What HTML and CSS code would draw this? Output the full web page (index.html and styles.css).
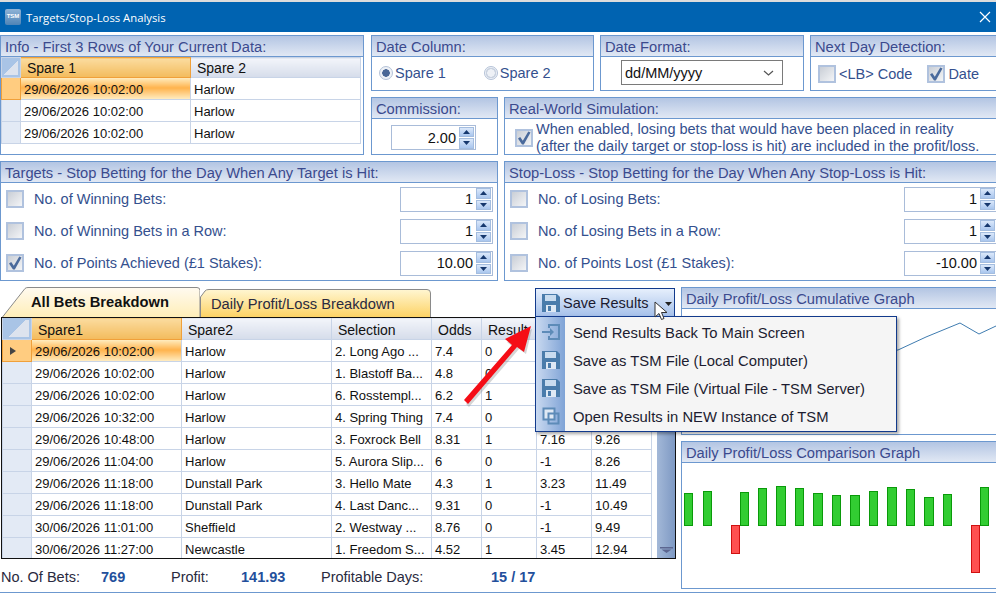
FILE: index.html
```html
<!DOCTYPE html>
<html lang="en">
<head>
    <meta charset="UTF-8">
    <title>Targets/Stop-Loss Analysis</title>
    <link rel="stylesheet" href="styles.css">
</head>
<body>
    <svg class="defs" width="0" height="0">
        <symbol id="floppy" viewBox="0 0 18 18">
            <path d="M0 0h15l3 3v15H0z" fill="#4a7cab"/>
            <rect x="3" y="1" width="11" height="6" fill="#c9dcef"/>
            <rect x="4" y="11" width="10" height="7" fill="#dfe9f4"/>
            <rect x="6" y="12" width="3" height="5" fill="#4a7cab"/>
        </symbol>
        <symbol id="tick" viewBox="0 0 14 14">
            <path d="M1 7.500L3.200 6l2.600 3.800L11.300 .5 13.500 1.500 6.800 13.500H5z" fill="#4a6a9c"/>
        </symbol>
        <symbol id="up" viewBox="0 0 7 4"><path d="M3.500 0L7 4H0z" fill="#16386e"/></symbol>
        <symbol id="down" viewBox="0 0 7 4"><path d="M0 0h7L3.500 4z" fill="#16386e"/></symbol>
    </svg>

    <div class="window">
        <div class="strip"></div>
        <div class="titlebar">
            <span class="app-icon">TSM</span>
            <span class="title">Targets/Stop-Loss Analysis</span>
            <svg class="close" width="12" height="12" viewBox="0 0 12 12"><path d="M1 1l10 10M11 1L1 11" stroke="#fff" stroke-width="1.200"/></svg>
        </div>

        <div class="content">
            <div class="row row-top">
                <section class="panel info">
                    <h2>Info - First 3 Rows of Your Current Data:</h2>
                    <table class="data info-table">
                        <colgroup><col class="c-head"><col class="c-wide"><col class="c-wide"></colgroup>
                        <tr>
                            <th class="corner"><span></span></th>
                            <th class="sel">Spare 1</th>
                            <th>Spare 2</th>
                        </tr>
                        <tr>
                            <td class="rh sel"></td>
                            <td class="cur">29/06/2026 10:02:00</td>
                            <td>Harlow</td>
                        </tr>
                        <tr><td class="rh"></td><td>29/06/2026 10:02:00</td><td>Harlow</td></tr>
                        <tr><td class="rh"></td><td>29/06/2026 10:02:00</td><td>Harlow</td></tr>
                    </table>
                </section>

                <div class="top-right">
                    <div class="row row-a">
                        <section class="panel date-col">
                            <h2>Date Column:</h2>
                            <div class="panel-body radios">
                                <span class="radio on"></span><span class="lbl first">Spare 1</span>
                                <span class="radio"></span><span class="lbl">Spare 2</span>
                            </div>
                        </section>
                        <section class="panel date-fmt">
                            <h2>Date Format:</h2>
                            <div class="select">
                                <span>dd/MM/yyyy</span>
                                <svg width="11" height="6" viewBox="0 0 11 6"><path d="M1 1l4.500 4L10 1" fill="none" stroke="#555" stroke-width="1.200"/></svg>
                            </div>
                        </section>
                        <section class="panel next-day">
                            <h2>Next Day Detection:</h2>
                            <div class="panel-body checks">
                                <span class="check"></span><span class="lbl lb">&lt;LB&gt; Code</span>
                                <span class="check"><svg><use href="#tick"/></svg></span><span class="lbl">Date</span>
                            </div>
                        </section>
                    </div>
                    <div class="row row-b">
                        <section class="panel commission">
                            <h2>Commission:</h2>
                            <div class="spin">
                                <span class="val">2.00</span>
                                <span class="arrows">
                                    <i><svg width="7" height="4"><use href="#up"/></svg></i>
                                    <i><svg width="7" height="4"><use href="#down"/></svg></i>
                                </span>
                            </div>
                        </section>
                        <section class="panel real">
                            <h2>Real-World Simulation:</h2>
                            <div class="real-body">
                                <span class="check"><svg><use href="#tick"/></svg></span>
                                <p class="lbl">When enabled, losing bets that would have been placed in reality<br>(after the daily target or stop-loss is hit) are included in the profit/loss.</p>
                            </div>
                        </section>
                    </div>
                </div>
            </div>

            <div class="row row-mid">
                <section class="panel targets">
                    <h2>Targets - Stop Betting for the Day When Any Target is Hit:</h2>
                    <div class="opt">
                        <span class="check"></span><span class="lbl">No. of Winning Bets:</span>
                        <div class="spin"><span class="val">1</span><span class="arrows"><i><svg width="7" height="4"><use href="#up"/></svg></i><i><svg width="7" height="4"><use href="#down"/></svg></i></span></div>
                    </div>
                    <div class="opt">
                        <span class="check"></span><span class="lbl">No. of Winning Bets in a Row:</span>
                        <div class="spin"><span class="val">1</span><span class="arrows"><i><svg width="7" height="4"><use href="#up"/></svg></i><i><svg width="7" height="4"><use href="#down"/></svg></i></span></div>
                    </div>
                    <div class="opt">
                        <span class="check"><svg><use href="#tick"/></svg></span><span class="lbl">No. of Points Achieved (£1 Stakes):</span>
                        <div class="spin"><span class="val">10.00</span><span class="arrows"><i><svg width="7" height="4"><use href="#up"/></svg></i><i><svg width="7" height="4"><use href="#down"/></svg></i></span></div>
                    </div>
                </section>
                <section class="panel stops">
                    <h2>Stop-Loss - Stop Betting for the Day When Any Stop-Loss is Hit:</h2>
                    <div class="opt">
                        <span class="check"></span><span class="lbl">No. of Losing Bets:</span>
                        <div class="spin"><span class="val">1</span><span class="arrows"><i><svg width="7" height="4"><use href="#up"/></svg></i><i><svg width="7" height="4"><use href="#down"/></svg></i></span></div>
                    </div>
                    <div class="opt">
                        <span class="check"></span><span class="lbl">No. of Losing Bets in a Row:</span>
                        <div class="spin"><span class="val">1</span><span class="arrows"><i><svg width="7" height="4"><use href="#up"/></svg></i><i><svg width="7" height="4"><use href="#down"/></svg></i></span></div>
                    </div>
                    <div class="opt">
                        <span class="check"></span><span class="lbl">No. of Points Lost (£1 Stakes):</span>
                        <div class="spin"><span class="val">-10.00</span><span class="arrows"><i><svg width="7" height="4"><use href="#up"/></svg></i><i><svg width="7" height="4"><use href="#down"/></svg></i></span></div>
                    </div>
                </section>
            </div>

            <div class="row row-low">
                <div class="results">
                    <div class="tabs">
                        <div class="tab active">
                            <svg class="tab-bg" viewBox="0 0 198 30" preserveAspectRatio="none">
                                <defs><linearGradient id="ta" x1="0" y1="0" x2="0" y2="1"><stop offset="0" stop-color="#fffaf0"/><stop offset="1" stop-color="#ffeeb8"/></linearGradient></defs>
                                <path d="M0.500 30L23 1.500Q24 .5 26 .5H195Q198 .5 198 3.500V30" fill="url(#ta)" stroke="#8a8a8a"/>
                            </svg>
                            <span>All Bets Breakdown</span>
                        </div>
                        <div class="tab">
                            <svg class="tab-bg" viewBox="0 0 231 28" preserveAspectRatio="none">
                                <defs><linearGradient id="tb" x1="0" y1="0" x2="0" y2="1"><stop offset="0" stop-color="#fff6d2"/><stop offset="1" stop-color="#fdd365"/></linearGradient></defs>
                                <path d="M0.500 28V8L5 2Q6 .5 9 .5H227Q230.500 .5 230.500 4V28" fill="url(#tb)" stroke="#8a8a8a"/>
                            </svg>
                            <span>Daily Profit/Loss Breakdown</span>
                        </div>
                    </div>

                    <div class="grid">
                        <table class="data bets">
                            <colgroup>
                                <col class="b0"><col class="b1"><col class="b1"><col class="b2"><col class="b3"><col class="b4"><col class="b4"><col class="b5">
                            </colgroup>
                            <tr>
                                <th class="corner"><span></span></th>
                                <th class="sel">Spare1</th><th>Spare2</th><th>Selection</th><th>Odds</th><th>Result</th><th></th><th></th>
                            </tr>
                            <tr><td class="rh sel"><b class="pointer"></b></td><td class="cur">29/06/2026 10:02:00</td><td>Harlow</td><td>2. Long Ago ...</td><td>7.4</td><td>0</td><td></td><td></td></tr>
                            <tr><td class="rh"></td><td>29/06/2026 10:02:00</td><td>Harlow</td><td>1. Blastoff Ba...</td><td>4.8</td><td>0</td><td></td><td></td></tr>
                            <tr><td class="rh"></td><td>29/06/2026 10:02:00</td><td>Harlow</td><td>6. Rosstempl...</td><td>6.2</td><td>1</td><td></td><td></td></tr>
                            <tr><td class="rh"></td><td>29/06/2026 10:32:00</td><td>Harlow</td><td>4. Spring Thing</td><td>7.4</td><td>0</td><td></td><td></td></tr>
                            <tr><td class="rh"></td><td>29/06/2026 10:48:00</td><td>Harlow</td><td>3. Foxrock Bell</td><td>8.31</td><td>1</td><td>7.16</td><td>9.26</td></tr>
                            <tr><td class="rh"></td><td>29/06/2026 11:04:00</td><td>Harlow</td><td>5. Aurora Slip...</td><td>6</td><td>0</td><td>-1</td><td>8.26</td></tr>
                            <tr><td class="rh"></td><td>29/06/2026 11:18:00</td><td>Dunstall Park</td><td>3. Hello Mate</td><td>4.3</td><td>1</td><td>3.23</td><td>11.49</td></tr>
                            <tr><td class="rh"></td><td>29/06/2026 11:18:00</td><td>Dunstall Park</td><td>4. Last Danc...</td><td>9.31</td><td>0</td><td>-1</td><td>10.49</td></tr>
                            <tr><td class="rh"></td><td>30/06/2026 11:01:00</td><td>Sheffield</td><td>2. Westway ...</td><td>8.76</td><td>0</td><td>-1</td><td>9.49</td></tr>
                            <tr><td class="rh"></td><td>30/06/2026 11:27:00</td><td>Newcastle</td><td>1. Freedom S...</td><td>4.52</td><td>1</td><td>3.45</td><td>12.94</td></tr>
                        </table>
                        <div class="scrollbar"><svg width="13" height="6" viewBox="0 0 13 6"><path d="M0 0h13v1.500H0zM1.500 2.500h10L6.500 6z" fill="#5c6690"/></svg></div>
                    </div>

                    <div class="totals">
                        <span class="t-a">No. Of Bets:</span><b class="t-b">769</b>
                        <span class="t-c">Profit:</span><b class="t-d">141.93</b>
                        <span class="t-e">Profitable Days:</span><b>15 / 17</b>
                    </div>
                </div>

                <div class="graphs">
                    <section class="panel graph-a">
                        <h2>Daily Profit/Loss Cumulative Graph</h2>
                        <svg class="plot" width="315" height="125" viewBox="682 309 315 125">
                            <polyline points="690,372 898,350 926,337 960,323 979,334 996,326" fill="none" stroke="#3f7cb0"/>
                        </svg>
                    </section>
                    <section class="panel graph-b">
                        <h2>Daily Profit/Loss Comparison Graph</h2>
                        <svg class="plot" width="315" height="126" viewBox="682 463 315 126">
                            <g fill="#32cd32" stroke="#0a9a0a">
                                <rect x="684.500" y="493.500" width="8" height="32"/>
                                <rect x="703.500" y="491.500" width="8" height="34"/>
                                <rect x="740.500" y="492.500" width="8" height="33"/>
                                <rect x="758.500" y="488.500" width="8" height="37"/>
                                <rect x="776.500" y="486.500" width="9" height="39"/>
                                <rect x="795.500" y="488.500" width="8" height="37"/>
                                <rect x="813.500" y="493.500" width="9" height="32"/>
                                <rect x="832.500" y="495.500" width="8" height="30"/>
                                <rect x="850.500" y="495.500" width="9" height="30"/>
                                <rect x="869.500" y="491.500" width="8" height="34"/>
                                <rect x="887.500" y="487.500" width="9" height="38"/>
                                <rect x="906.500" y="489.500" width="8" height="36"/>
                                <rect x="924.500" y="497.500" width="9" height="28"/>
                                <rect x="943.500" y="494.500" width="8" height="31"/>
                                <rect x="980.500" y="487.500" width="8" height="38"/>
                            </g>
                            <g fill="#ff5050" stroke="#d01010">
                                <rect x="731.500" y="525.500" width="8" height="28"/>
                                <rect x="971.500" y="525.500" width="8" height="47"/>
                            </g>
                        </svg>
                    </section>
                </div>
            </div>
        </div>

        <div class="save-btn">
            <svg width="18" height="18"><use href="#floppy"/></svg>
            <span>Save Results</span>
            <svg class="caret" width="7" height="4" viewBox="0 0 7 4"><path d="M0 0h7L3.500 4z" fill="#222"/></svg>
        </div>

        <div class="menu">
            <div class="menu-item">
                <svg width="18" height="18" viewBox="0 0 18 18"><path d="M7 5V2h10v14H7v-3" fill="none" stroke="#5d8bb8" stroke-width="2"/><path d="M0 8h8V5l4 4-4 4v-3H0z" fill="#5d8bb8"/></svg>
                <span>Send Results Back To Main Screen</span>
            </div>
            <div class="menu-item"><svg width="18" height="18"><use href="#floppy"/></svg><span>Save as TSM File (Local Computer)</span></div>
            <div class="menu-item"><svg width="18" height="18"><use href="#floppy"/></svg><span>Save as TSM File (Virtual File - TSM Server)</span></div>
            <div class="menu-item">
                <svg width="18" height="18" viewBox="0 0 18 18"><rect x="1.500" y="1.500" width="11" height="11" fill="#dfe9f4" stroke="#5d8bb8" stroke-width="2"/><rect x="6.500" y="6.500" width="10" height="10" fill="none" stroke="#5d8bb8" stroke-width="2"/></svg>
                <span>Open Results in NEW Instance of TSM</span>
            </div>
        </div>

        <svg class="red-arrow" width="80" height="90" viewBox="460 320 80 90">
            <path d="M465 402L513 346 506 340 531 327 525 352 518 347 468 405z" fill="#888" opacity=".35" transform="translate(1 2)"/>
            <path d="M464 400L512 345 505 339 531 326 524 352 517 347 468 404z" fill="#f50d16"/>
        </svg>

        <svg class="cursor" width="15" height="20" viewBox="0 0 15 20">
            <path d="M1 1v15l4-3.500 2.500 6 2.500-1-2.500-6H13z" fill="#fff" stroke="#333"/>
        </svg>
    </div>
</body>
</html>
```

FILE: styles.css
```css
* {
    box-sizing: border-box;
}
html, body {
    margin: 0;
    height: 100%;
    overflow: hidden;
}
body {
    font-family: "Liberation Sans", Arial, sans-serif;
    font-size: 14.5px;
    background-color: #fff;
    color: #34508e;
}
.defs {
    position: absolute;
}
.window {
    position: relative;
    width: 996px;
    height: 593px;
    overflow: hidden;
    border-bottom: 1px solid #6c98cf;
}
.strip {
    height: 2px;
    background-color: #dcdcdc;
}
.titlebar {
    height: 30px;
    background-color: #0063b1;
    color: #fff;
    display: flex;
    align-items: center;
    padding: 0 5px;
}
.app-icon {
    width: 16px;
    height: 16px;
    margin-right: 5px;
    border-radius: 2px;
    background: linear-gradient(#8fb3d6, #4f84b6);
    font-size: 6px;
    font-weight: bold;
    line-height: 14px;
    text-align: center;
}
.title {
    font-family: "Open Sans", sans-serif;
    font-size: 11.3px;
}
.close {
    margin-left: auto;
}
.content {
    padding-top: 3px;
    width: 1000px;
    display: flex;
    flex-direction: column;
    gap: 6px;
}
.row {
    display: flex;
    gap: 6px;
}
.row-top, .row-mid {
    height: 120px;
}
.row-top {
    gap: 7px;
}
.row-low {
    height: 305px;
    gap: 5px;
}

/* group boxes */
.panel {
    flex: none;
    border: 1px solid #6c98cf;
    background-color: #fff;
}
.panel h2 {
    margin: 0;
    height: 21px;
    padding-left: 4px;
    font-size: 14.7px;
    font-weight: normal;
    line-height: 22px;
    color: #3b4a8e;
    background: linear-gradient(#b3c5e3, #e1e8f4);
    border-bottom: 1px solid #6c98cf;
}
.info {
    width: 364px;
}
.top-right {
    flex: 1;
    display: flex;
    flex-direction: column;
    gap: 6px;
}
.row-a {
    height: 56px;
}
.row-b {
    height: 58px;
}
.date-col {
    width: 223px;
}
.date-fmt {
    width: 204px;
}
.next-day {
    width: 190px;
}
.commission {
    width: 127px;
}
.real {
    width: 500px;
}
.targets {
    width: 498px;
}
.stops {
    width: 496px;
}

/* tables */
table.data {
    table-layout: fixed;
    border-collapse: collapse;
    font-size: 13px;
    color: #111;
}
.data th, .data td {
    height: 22px;
    padding: 0 0 0 3px;
    border: 1px solid #c8d4e7;
    text-align: left;
    white-space: nowrap;
    overflow: hidden;
    font-weight: normal;
}
.data th {
    padding-left: 6px;
    font-size: 14px;
    background: linear-gradient(#f3f5fa, #d5dcea);
}
.data th.sel {
    background: linear-gradient(#fbdc9f, #f3bb5c);
    border-color: #f0a03a;
}
.data td.cur {
    background: linear-gradient(#ffe9b8, #ffb34d 45%, #ffeec5);
}
.data .rh {
    padding: 0;
    background-color: #e3eaf5;
}
.data .rh.sel {
    background-color: #ffcc80;
    border-color: #f0a03a;
}
.data .corner {
    padding: 2px;
    background: #a9c4e6;
}
.corner span {
    display: block;
    height: 100%;
    background: linear-gradient(135deg, transparent 50%, #dde3ee 50%);
}
.info-table {
    width: 360px;
}
.info-table th {
    height: 20px;
}
.info-table td {
    padding-top: 2px;
}
.c-head {
    width: 19px;
}
.c-wide {
    width: 170px;
}

/* inputs */
.panel-body {
    height: 34px;
    display: flex;
    align-items: center;
}
.radios {
    height: 32px;
    padding-left: 7px;
}
.radio {
    width: 14px;
    height: 14px;
    margin-right: 2px;
    border-radius: 50%;
    border: 1px solid #b4c2d8;
    background: radial-gradient(circle, #eef1f6 0 3.500px, #c9d2e0 4px 5px, #eef1f6 5.500px);
    flex: none;
}
.radio.on {
    background: radial-gradient(circle, #4a6796 0 3.500px, #eef1f6 4px);
}
.first {
    margin-right: 38px;
}
.lbl {
    color: #34508e;
    font-size: 14.5px;
}
.check {
    display: block;
    flex: none;
    width: 18px;
    height: 18px;
    border: 2px solid #b0c2de;
    background: linear-gradient(135deg, #c9ced6, #f4f5f7);
}
.check svg {
    display: block;
    width: 14px;
    height: 14px;
}
.checks {
    padding-left: 7px;
    gap: 3px;
}
.lb {
    margin-right: 12px;
}
.select {
    margin: 3px 0 0 20px;
    width: 162px;
    height: 25px;
    padding: 0 8px 0 3px;
    border: 1px solid #7a7a7a;
    display: flex;
    align-items: center;
    justify-content: space-between;
    color: #111;
}
.spin {
    display: flex;
    align-items: center;
    border: 1px solid #a9bcd9;
    width: 93px;
    height: 25px;
    padding-right: 1px;
    background-color: #fff;
}
.val {
    flex: 1;
    text-align: right;
    padding-right: 3px;
    color: #111;
    font-size: 14.5px;
}
.arrows {
    width: 15px;
    display: flex;
    flex-direction: column;
    gap: 1px;
}
.arrows i {
    display: flex;
    align-items: center;
    justify-content: center;
    height: 10.500px;
    border: 1px solid #a4bddf;
    background: linear-gradient(#dbe8fa, #a9c6ee);
}
.arrows svg {
    display: block;
}
.commission .spin {
    width: 85px;
    margin: 6px 0 0 19px;
}
.real-body {
    display: flex;
    align-items: center;
    gap: 3px;
    padding: 2px 0 0 10px;
}
.real-body .lbl {
    margin: 0;
    line-height: 17px;
    white-space: nowrap;
}
.opt {
    height: 32px;
    display: flex;
    align-items: center;
    padding-left: 5px;
}
.opt .lbl {
    flex: 1;
    margin-left: 10px;
}
.opt .spin {
    margin-right: 4px;
}
.stops .opt .spin {
    margin-right: 2px;
}

/* results */
.results {
    width: 676px;
    position: relative;
}
.tabs {
    display: flex;
    align-items: flex-end;
    height: 30px;
    padding-left: 2px;
    color: #111;
}
.tab {
    position: relative;
    width: 198px;
    height: 30px;
    padding-left: 29px;
    line-height: 31px;
    font-size: 14.7px;
    font-weight: bold;
}
.tab + .tab {
    width: 231px;
    height: 28px;
    padding-left: 11px;
    line-height: 30px;
    font-weight: normal;
    color: #2a2a40;
}
.tab span {
    position: relative;
}
.tab-bg {
    position: absolute;
    left: 0;
    top: 0;
    width: 100%;
    height: 100%;
}
.grid {
    margin-left: 1px;
    width: 675px;
    height: 242px;
    border: 1px solid #111;
    display: flex;
    overflow: hidden;
}
.bets {
    width: 649px;
    flex: none;
    align-self: flex-start;
    margin: -1px 0 0 0;
}
.bets th, .bets td {
    padding-top: 2px;
}
.bets th.corner, .bets td.rh {
    padding: 2px;
}
.b0 {
    width: 29px;
}
.b1 {
    width: 150px;
}
.b2 {
    width: 100px;
}
.b3 {
    width: 50px;
}
.b4 {
    width: 55px;
}
.b5 {
    width: 60px;
}
.pointer {
    display: block;
    margin-left: 5px;
    width: 0;
    height: 0;
    border-left: 6px solid #444;
    border-top: 4.500px solid transparent;
    border-bottom: 4.500px solid transparent;
}
.scrollbar {
    margin-left: auto;
    width: 18px;
    height: 100%;
    background: linear-gradient(90deg, #a3b8d8, #7e99c3);
    display: flex;
    align-items: flex-end;
    justify-content: center;
    padding-bottom: 5px;
}
.totals {
    height: 33px;
    display: flex;
    align-items: center;
    padding: 2px 0 0 1px;
    font-size: 14.5px;
    color: #2a2a40;
}
.totals b {
    color: #234f9c;
}
.t-a {
    width: 100px;
}
.t-b {
    width: 70px;
}
.t-c {
    width: 70px;
}
.t-d {
    width: 80px;
}
.t-e {
    width: 170px;
}

/* graphs */
.graphs {
    width: 320px;
    display: flex;
    flex-direction: column;
    gap: 6px;
}
.graph-a {
    height: 148px;
}
.graph-b {
    height: 148px;
}
.plot {
    display: block;
}

/* popup button and menu */
.save-btn {
    position: absolute;
    left: 535px;
    top: 288px;
    width: 140px;
    height: 29px;
    display: flex;
    align-items: center;
    gap: 3px;
    padding: 1px 0 0 6px;
    border: 1px solid #123a8c;
    background: linear-gradient(#e6effc, #a6c1ea);
    color: #1a1a30;
}
.caret {
    position: absolute;
    right: 2px;
    top: 13px;
}
.menu {
    position: absolute;
    left: 535px;
    top: 316px;
    width: 362px;
    height: 116px;
    padding-top: 1px;
    border: 1px solid #123a8c;
    background: linear-gradient(90deg, #c9d9f0, #7fa3d6 29px, #f5f5f5 29px);
    box-shadow: 2px 2px 3px rgba(0, 0, 0, 0.35);
    color: #1c1c30;
    font-size: 14.8px;
}
.menu-item {
    height: 28px;
    display: flex;
    align-items: center;
    gap: 13px;
    padding-left: 6px;
}
.menu-item span {
    padding-top: 2px;
}
.red-arrow {
    position: absolute;
    left: 460px;
    top: 320px;
}
.cursor {
    position: absolute;
    left: 654px;
    top: 301px;
}
```
